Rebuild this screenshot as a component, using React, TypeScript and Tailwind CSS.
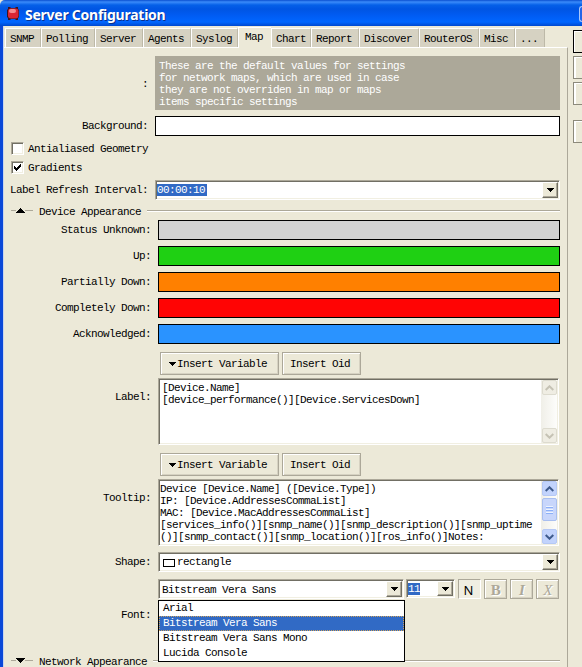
import type { ReactNode } from 'react';

function Triangle({ up = false, className = '' }: { up?: boolean; className?: string }) {
  return (
    <svg width="9" height="5" viewBox="0 0 9 5" className={`shrink-0 ${className}`} shapeRendering="crispEdges">
      <path d={up ? 'M4 0h1v1h1v1h1v1h1v1h1v1H0V4h1V3h1V2h1V1h1z' : 'M0 0h9v1H8v1H7v1H6v1H5v1H4V4H3V3H2V2H1V1H0z'} fill="#000" />
    </svg>
  );
}

function DropArrow() {
  return (
    <div className="flex w-4 shrink-0 items-center justify-center border border-t-white border-l-white border-r-[#716f64] border-b-[#716f64] bg-[#ece9d8] shadow-[inset_-1px_-1px_0_#aca899]">
      <svg width="7" height="4" viewBox="0 0 7 4" shapeRendering="crispEdges">
        <path d="M0 0h7v1H6v1H5v1H4v1H3V3H2V2H1V1H0z" fill="#000" />
      </svg>
    </div>
  );
}

const sunken =
  'border pt-px pl-px pr-px pb-px border-t-[#aca899] border-l-[#aca899] border-r-white border-b-white bg-white shadow-[inset_1px_1px_0_#716f64,inset_-1px_-1px_0_#f1efe2]';

function Combo({ className, children }: { className: string; children: ReactNode }) {
  return (
    <div className={`flex ${sunken} ${className}`}>
      <div className="flex min-w-0 flex-1 items-center">{children}</div>
      <DropArrow />
    </div>
  );
}

function Label({ wide = false, className = '', children }: { wide?: boolean; className?: string; children: ReactNode }) {
  return <div className={`shrink-0 text-right ${wide ? 'mr-[7px] w-[147px]' : 'mr-[7px] w-[144px]'} ${className}`}>{children}</div>;
}

const tabs = [
  { name: 'SNMP', width: 'w-[36px]' },
  { name: 'Polling', width: 'w-[54px]' },
  { name: 'Server', width: 'w-[48px]' },
  { name: 'Agents', width: 'w-[48px]' },
  { name: 'Syslog', width: 'w-[47px]' },
  { name: 'Map', width: 'w-[33px]', active: true },
  { name: 'Chart', width: 'w-[40px]' },
  { name: 'Report', width: 'w-[48px]' },
  { name: 'Discover', width: 'w-[60px]' },
  { name: 'RouterOS', width: 'w-[60px]' },
  { name: 'Misc', width: 'w-[36px]' },
  { name: '...', width: 'w-[30px]' },
];

const statuses = [
  { name: 'Status Unknown:', color: 'bg-[#d2d2d2]' },
  { name: 'Up:', color: 'bg-[#1fd013]' },
  { name: 'Partially Down:', color: 'bg-[#ff8000]' },
  { name: 'Completely Down:', color: 'bg-[#ff0404]' },
  { name: 'Acknowledged:', color: 'bg-[#2a93ff]' },
];

function Check({ checked = false, children }: { checked?: boolean; children: ReactNode }) {
  return (
    <div className="flex h-[13px] items-center pl-[7px]">
      <div className={`mr-[4px] flex size-[13px] items-center justify-center ${sunken}`}>
        {checked && (
          <svg width="9" height="9" viewBox="0 0 9 9" className="shrink-0" shapeRendering="crispEdges">
            <path d="M1 3h1v1h1v1h1V4h1V3h1V2h1V1h1v3H7v1H6v1H5v1H4v1H3V7H2V6H1z" fill="#000" />
          </svg>
        )}
      </div>
      <span>{children}</span>
    </div>
  );
}

function Section({ up = false, title }: { up?: boolean; title: string }) {
  return (
    <div className="flex h-3 pl-[7px]">
      <div className="mt-[4px] h-px w-[5px] bg-[#aca899]" />
      <Triangle up={up} className="mt-[2px]" />
      <div className="mt-[4px] mr-[6px] h-px w-[8px] bg-[#aca899]" />
      <span>{title}</span>
      <div className="mt-[4px] ml-[6px] h-[2px] flex-1 border-b border-white bg-[#aca899]" />
    </div>
  );
}

const raised = 'border border-[#aca899] bg-[#ece9d8] shadow-[inset_1px_1px_0_#fff,inset_-1px_-1px_0_#d6d2c2]';

function InsertButtons() {
  return (
    <div className="flex h-[23px] gap-[3px] pl-[156px]">
      <div className={`flex w-[119px] items-center pl-[7px] ${raised}`}>
        <svg width="9" height="5" viewBox="0 0 9 5" shapeRendering="crispEdges" className="mt-px">
          <path d="M1 0h7v1H7v1H6v1H5v1H4V3H3V2H2V1H1z" fill="#000" />
        </svg>
        <span>Insert Variable</span>
      </div>
      <div className={`flex w-[79px] items-center pl-[7px] ${raised}`}>Insert Oid</div>
    </div>
  );
}

function ScrollButton({ up = false, enabled = false }: { up?: boolean; enabled?: boolean }) {
  return (
    <div
      className={`flex h-[15px] w-[15px] items-center justify-center rounded-[2px] border ${
        enabled ? 'border-[#b5c8f5] bg-[#c2d3fc]' : 'border-[#dddbcf] bg-[#efede3]'
      }`}
    >
      <svg width="9" height="6" viewBox="0 0 9 6" fill="none" stroke={enabled ? '#3e5a8c' : '#c5c2b4'} strokeWidth="2">
        <path d={up ? 'M.7 5 4.5 1.3 8.3 5' : 'M.7 1 4.5 4.7 8.3 1'} />
      </svg>
    </div>
  );
}

function TextArea({ enabled = false, children }: { enabled?: boolean; children: ReactNode }) {
  return (
    <div className={`flex h-[67px] w-[401px] ${sunken}`}>
      <div className="min-w-0 flex-1 whitespace-pre pt-[2px]">{children}</div>
      <div className="flex w-[16px] flex-col items-center justify-between bg-gradient-to-r from-[#f0efe8] to-[#fdfdfb]">
        <ScrollButton up enabled={enabled} />
        {enabled && (
          <div className="mb-[7px] flex h-[23px] w-[15px] flex-col items-center justify-center gap-px rounded-[2px] border border-[#a9bff0] bg-[#c8d6fb]">
            <div className="h-px w-[7px] bg-[#eef4fe] shadow-[0_1px_0_#8cb0f8]" />
            <div className="mt-px h-px w-[7px] bg-[#eef4fe] shadow-[0_1px_0_#8cb0f8]" />
            <div className="mt-px h-px w-[7px] bg-[#eef4fe] shadow-[0_1px_0_#8cb0f8]" />
          </div>
        )}
        <ScrollButton enabled={enabled} />
      </div>
    </div>
  );
}

const fonts = ['Arial', 'Bitstream Vera Sans', 'Bitstream Vera Sans Mono', 'Lucida Console'];

export default function App() {
  return (
    <div className="h-[667px] w-[582px] overflow-hidden bg-[#ece9d8] font-['Liberation_Mono',monospace] text-[11px] leading-[12px] tracking-[-0.6px] whitespace-nowrap text-black">
      <header className="flex h-[26px] items-center rounded-tl-[5px] bg-[linear-gradient(180deg,#0a4fd0_0px,#3a8bfa_2px,#0560e8_5px,#0055e3_9px,#005bf2_15px,#0066ff_22px,#0048cf_26px)] pl-[6px]">
        <svg width="14" height="15" viewBox="0 0 14 15" className="mt-[1px] shrink-0">
          <path d="M2 1h2l1 1h4l1-1h2v2l1 1v7l-1 1v2h-2l-1-1H5l-1 1H2v-2l-1-1V4l1-1z" fill="#3b1520" />
          <rect x="2" y="2.5" width="10.5" height="10" rx="3" fill="#dc2634" />
          <rect x="3" y="3" width="7" height="4" rx="2" fill="#f58b8e" />
        </svg>
        <h1 className="mt-[4px] ml-[5px] font-['Noto_Sans',sans-serif] text-[14px] leading-[18px] font-bold tracking-[-0.25px] text-white [text-shadow:1px_1px_0_#0b2f8c]">
          Server Configuration
        </h1>
        <div className="mt-[2px] ml-auto h-[16px] w-[3px] rounded-l-[3px] border border-r-0 border-[#a9c8fb] bg-[#2465e8]" />
      </header>

      <div className="flex h-[641px] border-l-[3px] border-[#0a48d8]">
        <div className="w-px shrink-0 bg-[#c9d5ee]" />
        <main className="flex w-[564px] shrink-0 flex-col">
          <nav className="flex h-[21px] items-end pl-px">
            {tabs.map((tab) => (
              <div
                key={tab.name}
                className={`flex shrink-0 border-t border-l border-white ${tab.width} ${
                  tab.active
                    ? 'z-10 -mb-px h-[21px] bg-[#ece9d8] pt-[3px] pl-[6px]'
                    : 'h-[19px] border-r border-r-[#bdb9a8] bg-[#d6d2c2] pt-[4px] pl-[4px]'
                }`}
              >
                {tab.name}
              </div>
            ))}
          </nav>
          <section className="h-[620px] border-t border-r border-t-white border-r-[#aca899]">
            <div className="flex h-[62px] pt-[8px]">
              <Label className="pt-[22px]">:</Label>
              <div className="w-[405px] bg-[#aca899] pt-[4px] pl-[4px] whitespace-pre text-white">
                {'These are the default values for settings\nfor network maps, which are used in case\nthey are not overriden in map or maps\nitems specific settings'}
              </div>
            </div>
            <div className="mt-[6px] flex h-5 items-center">
              <Label>Background:</Label>
              <div className="h-5 w-[405px] border border-black bg-white" />
            </div>
            <div className="mt-[6px]">
              <Check>Antialiased Geometry</Check>
            </div>
            <div className="mt-[6px]">
              <Check checked>Gradients</Check>
            </div>
            <div className="mt-[6px] flex h-5 items-center">
              <Label>Label Refresh Interval:</Label>
              <Combo className="h-5 w-[405px]">
                <span className="bg-[#316ac5] pr-[2px] text-white">00:00:10</span>
              </Combo>
            </div>
            <div className="mt-[6px] w-[556px]">
              <Section up title="Device Appearance" />
            </div>
            <div className="mt-[2px] flex flex-col gap-[6px]">
              {statuses.map((s) => (
                <div key={s.name} className="flex h-5 items-center">
                  <Label wide>{s.name}</Label>
                  <div className={`h-5 w-[402px] border border-black ${s.color}`} />
                </div>
              ))}
            </div>
            <div className="mt-[8px]">
              <InsertButtons />
            </div>
            <div className="mt-[3px] flex">
              <Label wide className="pt-[13px]">Label:</Label>
              <TextArea>
                <div className="pl-[2px]">{'[Device.Name]\n[device_performance()][Device.ServicesDown]'}</div>
              </TextArea>
            </div>
            <div className="mt-[8px]">
              <InsertButtons />
            </div>
            <div className="mt-[3px] flex">
              <Label wide className="pt-[13px]">Tooltip:</Label>
              <TextArea enabled>
                {'Device [Device.Name] ([Device.Type])\nIP: [Device.AddressesCommaList]\nMAC: [Device.MacAddressesCommaList]\n[services_info()][snmp_name()][snmp_description()][snmp_uptime\n()][snmp_contact()][snmp_location()][ros_info()]Notes:'}
              </TextArea>
            </div>
            <div className="mt-[6px] flex h-5 items-center">
              <Label wide>Shape:</Label>
              <Combo className="h-5 w-[402px]">
                <div className="mt-[2px] mr-[2px] ml-[3px] h-[8px] w-[12px] border border-black" />
                <span>rectangle</span>
              </Combo>
            </div>
            <div className="relative mt-[7px] flex h-5">
              <Label wide className="pt-[30px]">Font:</Label>
              <Combo className="h-5 w-[246px]">
                <span className="pt-px pl-[2px]">Bitstream Vera Sans</span>
              </Combo>
              <Combo className="ml-[2px] h-[19px] w-[49px]">
                <span className="bg-[#316ac5] text-white">11</span>
              </Combo>
              <div className="ml-[3px] flex h-5 gap-[3px] text-center text-[#aca899]">
                <div className="w-[23px] border border-t-[#aca899] border-l-[#aca899] border-r-white border-b-white bg-[#f0eee2] pt-[4px] pr-[2px] font-['Noto_Sans',sans-serif] text-[13px] tracking-normal text-black">N</div>
                <div className={`w-[23px] pt-[4px] font-['Liberation_Serif',serif] text-[15px] font-bold [text-shadow:1px_1px_0_#fff] ${raised}`}>B</div>
                <div className={`w-[23px] pt-[4px] font-['Liberation_Serif',serif] text-[15px] font-bold italic [text-shadow:1px_1px_0_#fff] ${raised}`}>I</div>
                <div className={`w-[23px] pt-[4px] font-['Liberation_Serif',serif] text-[15px] italic [text-shadow:1px_1px_0_#fff] ${raised}`}>X</div>
              </div>
              <ul className="absolute top-[21px] left-[154px] z-20 h-[62px] w-[247px] border border-black bg-white">
                {fonts.map((f) => (
                  <li
                    key={f}
                    className={`h-[15px] pt-px pl-[4px] leading-[13px] ${
                      f === 'Bitstream Vera Sans' ? 'bg-[#316ac5] text-white outline-1 -outline-offset-1 outline-dotted outline-[#cfa15a]' : ''
                    }`}
                  >
                    {f}
                  </li>
                ))}
              </ul>
            </div>
            <div className="mt-[57px] w-[556px]">
              <Section title="Network Appearance" />
            </div>
          </section>
        </main>
        <aside className="flex flex-1 flex-col pt-[4px] pl-[5px]">
          <div className="h-[23px] border border-r-0 border-black shadow-[inset_1px_1px_0_#fff]" />
          <div className="mt-[3px] h-[23px] border border-r-0 border-[#8d8a7c] shadow-[inset_2px_1px_0_#fff]" />
          <div className="mt-[3px] h-[23px] border border-r-0 border-[#8d8a7c] shadow-[inset_2px_1px_0_#fff]" />
          <div className="mt-[15px] h-[23px] border border-r-0 border-[#8d8a7c] shadow-[inset_2px_1px_0_#fff]" />
        </aside>
      </div>
    </div>
  );
}
